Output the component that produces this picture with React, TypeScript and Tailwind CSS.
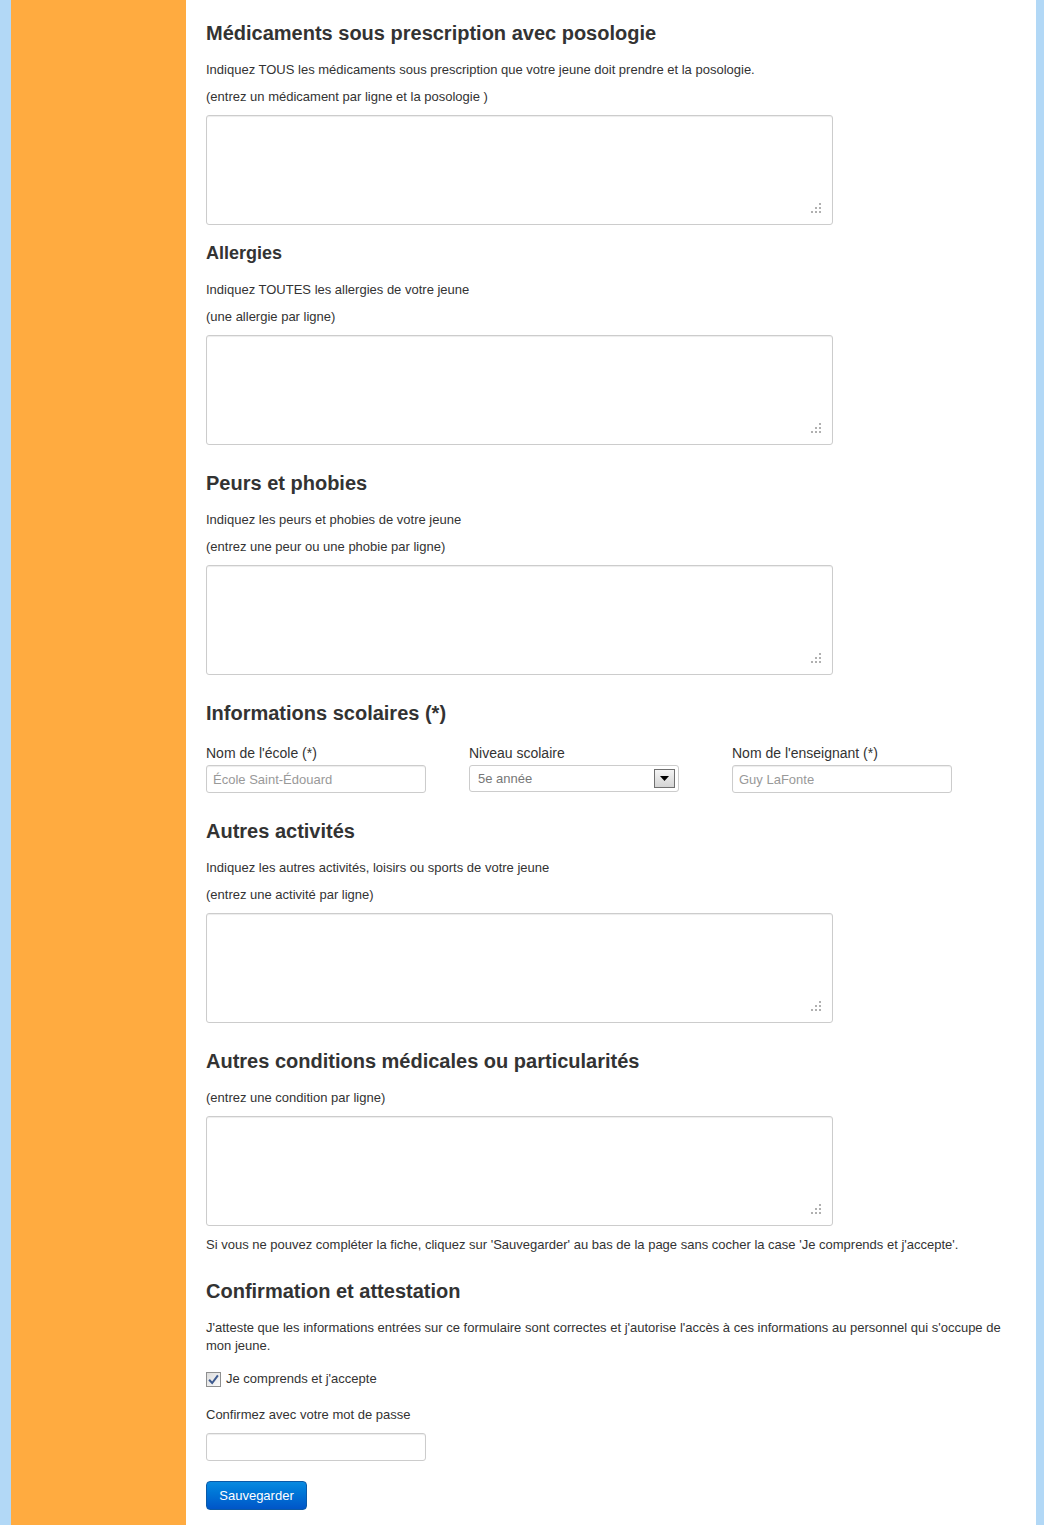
import React from 'react'

function Grip() {
  return (
    <svg className="pointer-events-none absolute right-[12px] bottom-[12px]" width="10" height="10" viewBox="0 0 10 10">
      <rect x="8" y="0" width="2" height="2" fill="#b0b0b0" />
      <rect x="4" y="4" width="2" height="2" fill="#b0b0b0" />
      <rect x="8" y="4" width="2" height="2" fill="#b0b0b0" />
      <rect x="0" y="8" width="2" height="2" fill="#b0b0b0" />
      <rect x="4" y="8" width="2" height="2" fill="#b0b0b0" />
      <rect x="8" y="8" width="2" height="2" fill="#b0b0b0" />
    </svg>
  )
}

function Area({ className = '' }: { className?: string }) {
  return (
    <div className={`relative w-[627px] h-[110px] ${className}`}>
      <textarea className="block w-full h-full resize-none rounded-[3px] border border-[#ccc] bg-white shadow-[inset_0_1px_1px_rgba(0,0,0,0.075)] outline-none" />
      <Grip />
    </div>
  )
}

function TextInput({ placeholder, width = 'w-[220px]' }: { placeholder?: string; width?: string }) {
  return (
    <input
      type="text"
      placeholder={placeholder}
      className={`block ${width} h-[28px] rounded-[3px] border border-[#ccc] bg-white px-[6px] text-[13px] text-[#555] placeholder:text-[#999] shadow-[inset_0_1px_1px_rgba(0,0,0,0.075)] outline-none`}
    />
  )
}

const h2 = 'text-[20px] leading-[30px] font-bold text-[#333]'
const p = 'text-[13px] leading-[18px] text-[#333]'

export default function App() {
  return (
    <div className="flex min-h-[1525px] w-full font-['Liberation_Sans',Arial,sans-serif]">
      <div className="w-[11px] shrink-0 bg-[#b2d8f6]" />
      <div className="w-[175px] shrink-0 bg-[#ffab40]" />
      <main className="flex-1 bg-white pl-[20px] pt-[18px] pb-[15px]">
        {/* Médicaments */}
        <h2 className={h2}>Médicaments sous prescription avec posologie</h2>
        <p className={`${p} mt-[13px]`}>Indiquez TOUS les médicaments sous prescription que votre jeune doit prendre et la posologie.</p>
        <p className={`${p} mt-[9px]`}>(entrez un médicament par ligne et la posologie )</p>
        <Area className="mt-[9px]" />

        {/* Allergies */}
        <h3 className="mt-[13px] text-[18px] leading-[30px] font-bold text-[#333]">Allergies</h3>
        <p className={`${p} mt-[13px]`}>Indiquez TOUTES les allergies de votre jeune</p>
        <p className={`${p} mt-[9px]`}>(une allergie par ligne)</p>
        <Area className="mt-[9px]" />

        {/* Peurs */}
        <h2 className={`${h2} mt-[23px]`}>Peurs et phobies</h2>
        <p className={`${p} mt-[13px]`}>Indiquez les peurs et phobies de votre jeune</p>
        <p className={`${p} mt-[9px]`}>(entrez une peur ou une phobie par ligne)</p>
        <Area className="mt-[9px]" />

        {/* Informations scolaires */}
        <h2 className={`${h2} mt-[23px]`}>Informations scolaires (*)</h2>
        <div className="mt-[16px] flex">
          <div className="w-[263px]">
            <label className="block text-[14px] leading-[18px] text-[#333]">Nom de l'école (*)</label>
            <div className="mt-[3px]">
              <TextInput placeholder="École Saint-Édouard" />
            </div>
          </div>
          <div className="w-[263px]">
            <label className="block text-[14px] leading-[18px] text-[#333]">Niveau scolaire</label>
            <div className="relative mt-[3px] w-[210px]">
              <select
                defaultValue="5e"
                className="block h-[27px] w-full appearance-none rounded-[3px] border border-[#ccc] bg-white pl-[8px] text-[13px] text-[#777] outline-none"
              >
                <option value="5e">5e année</option>
              </select>
              <div className="pointer-events-none absolute right-[4px] top-[4px] flex h-[19px] w-[21px] items-center justify-center border border-[#707070] bg-gradient-to-b from-[#f4f4f4] to-[#d4d4d4]">
                <svg width="9" height="5" viewBox="0 0 9 5">
                  <path d="M0 0h9L4.5 5z" fill="#000" />
                </svg>
              </div>
            </div>
          </div>
          <div className="w-[263px]">
            <label className="block text-[14px] leading-[18px] text-[#333]">Nom de l'enseignant (*)</label>
            <div className="mt-[3px]">
              <TextInput placeholder="Guy LaFonte" />
            </div>
          </div>
        </div>

        {/* Autres activités */}
        <h2 className={`${h2} mt-[23px]`}>Autres activités</h2>
        <p className={`${p} mt-[13px]`}>Indiquez les autres activités, loisirs ou sports de votre jeune</p>
        <p className={`${p} mt-[9px]`}>(entrez une activité par ligne)</p>
        <Area className="mt-[9px]" />

        {/* Autres conditions */}
        <h2 className={`${h2} mt-[23px]`}>Autres conditions médicales ou particularités</h2>
        <p className={`${p} mt-[13px]`}>(entrez une condition par ligne)</p>
        <Area className="mt-[9px]" />
        <p className={`${p} mt-[10px]`}>
          Si vous ne pouvez compléter la fiche, cliquez sur 'Sauvegarder' au bas de la page sans cocher la case 'Je comprends et j'accepte'.
        </p>

        {/* Confirmation */}
        <h2 className={`${h2} mt-[22px]`}>Confirmation et attestation</h2>
        <p className={`${p} mt-[13px] pr-[28px]`}>
          J'atteste que les informations entrées sur ce formulaire sont correctes et j'autorise l'accès à ces informations au personnel qui s'occupe de mon jeune.
        </p>
        <label className="mt-[15px] flex items-center gap-[5px] text-[13px] leading-[18px] text-[#333]">
          <span className="flex h-[15px] w-[15px] items-center justify-center border border-[#8e8f8f] bg-gradient-to-br from-[#dcdcdc] to-[#fbfbfb]">
            <svg width="11" height="11" viewBox="0 0 10 10">
              <path d="M1 5.2 L3.8 8.2 L9 1.2" fill="none" stroke="#3d5a8f" strokeWidth="1.8" />
            </svg>
          </span>
          Je comprends et j'accepte
        </label>
        <p className={`${p} mt-[18px]`}>Confirmez avec votre mot de passe</p>
        <div className="mt-[9px]">
          <input
            type="password"
            className="block h-[28px] w-[220px] rounded-[3px] border border-[#ccc] bg-white shadow-[inset_0_1px_1px_rgba(0,0,0,0.075)] outline-none"
          />
        </div>
        <button className="mt-[20px] h-[29px] w-[101px] rounded-[4px] border border-[#0a5aa8] bg-gradient-to-b from-[#0a8ae0] to-[#0055c8] text-[13px] text-white">
          Sauvegarder
        </button>
      </main>
      <div className="w-[8px] shrink-0 bg-[#b2d8f6]" />
    </div>
  )
}
